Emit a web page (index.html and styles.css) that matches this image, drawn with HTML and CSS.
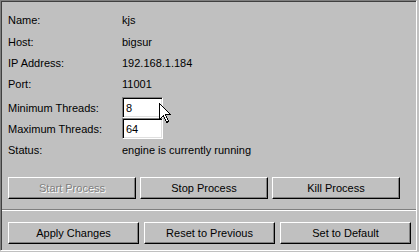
FILE: index.html
```html
<!DOCTYPE html>
<html>
<head>
<meta charset="utf-8">
<link rel="stylesheet" href="styles.css">
</head>
<body>
<div class="panel">
  <div class="info">
    <div class="label">Name:</div><div class="value">kjs</div>
    <div class="label">Host:</div><div class="value">bigsur</div>
    <div class="label">IP Address:</div><div class="value">192.168.1.184</div>
    <div class="label">Port:</div><div class="value">11001</div>
    <div class="label">Minimum Threads:</div><div class="value"><input class="field" type="text" value="8"></div>
    <div class="label">Maximum Threads:</div><div class="value"><input class="field" type="text" value="64"></div>
    <div class="label">Status:</div><div class="value">engine is currently running</div>
  </div>
  <div class="buttons row1">
    <button class="btn" disabled>Start Process</button>
    <button class="btn">Stop Process</button>
    <button class="btn">Kill Process</button>
  </div>
  <div class="separator"></div>
  <div class="buttons row2">
    <button class="btn">Apply Changes</button>
    <button class="btn">Reset to Previous</button>
    <button class="btn">Set to Default</button>
  </div>
  <svg class="cursor" width="13" height="21" viewBox="0 0 13 21">
    <path d="M0.5,0.5 V16.5 L4.5,12.5 L7.5,19.5 L9.5,18.5 L6.5,11.5 H11.5 Z" fill="#fff" stroke="#000" stroke-width="1" shape-rendering="crispEdges"/>
  </svg>
</div>
</body>
</html>
```
FILE: styles.css
```css
html, body {
  margin: 0;
  padding: 0;
  background: #c0c0c0;
}
body {
  width: 419px;
  height: 252px;
  overflow: hidden;
  font-family: "Liberation Sans", Arial, sans-serif;
  font-size: 11px;
  color: #000;
}
.panel {
  position: relative;
  box-sizing: border-box;
  width: 417px;
  height: 251px;
  border-top: 1px solid #808080;
  border-left: 1px solid #808080;
  border-right: 1px solid #fff;
  border-bottom: 1px solid #fff;
  box-shadow: inset 1px 1px 0 #404040;
  padding: 1px 0 0 1px;
  display: flex;
  flex-direction: column;
}
.info {
  display: grid;
  grid-template-columns: 114px auto;
  grid-template-rows: 22px 21px 21px 24px 21px 21px 22px;
  align-items: start;
  margin-top: 7px;
  padding-left: 6px;
  line-height: 22px;
}
.label, .value {
  white-space: nowrap;
}
.field {
  display: block;
  box-sizing: border-box;
  width: 41px;
  height: 21px;
  margin: 0;
  padding: 0 3px;
  font-family: "Liberation Sans", Arial, sans-serif;
  font-size: 11px;
  line-height: 17px;
  color: #000;
  background: #fff;
  border-top: 1px solid #808080;
  border-left: 1px solid #808080;
  border-right: 1px solid #fff;
  border-bottom: 1px solid #fff;
  box-shadow: inset 1px 1px 0 #000, inset -1px -1px 0 #dfdfdf;
  outline: none;
}
.buttons {
  display: flex;
  padding-left: 6px;
}
.row1 {
  margin-top: 16px;
  gap: 4px;
}
.row1 .btn {
  width: 128px;
}
.row2 {
  margin-top: 11px;
  gap: 5px;
}
.row2 .btn {
  width: 131px;
}
.btn {
  box-sizing: border-box;
  height: 22px;
  margin: 0;
  padding: 0;
  font-family: "Liberation Sans", Arial, sans-serif;
  font-size: 11px;
  line-height: 20px;
  color: #000;
  background: #c0c0c0;
  border-top: 1px solid #fff;
  border-left: 1px solid #fff;
  border-right: 1px solid #000;
  border-bottom: 1px solid #000;
  box-shadow: inset -1px -1px 0 #808080;
  border-radius: 0;
  text-align: center;
}
.btn:disabled {
  color: #808080;
  text-shadow: 1px 1px 0 #fff;
}
.separator {
  margin-top: 10px;
  height: 0;
  border-top: 1px solid #808080;
  border-bottom: 1px solid #fff;
}
.cursor {
  position: absolute;
  left: 158px;
  top: 102px;
}
```
